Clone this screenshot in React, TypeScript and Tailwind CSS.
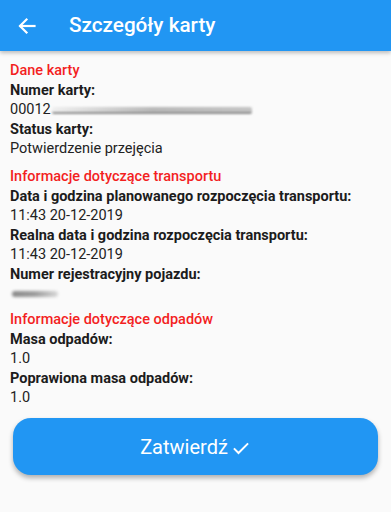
import React from "react"

type Row = {
    label: string
    value?: React.ReactNode
}

type Section = {
    title: string
    rows: Row[]
}

const CardNumber = () => (
    <span className="flex items-center">
        <span>00012</span>
        <span className="ml-[1px] h-[7px] w-[200px] rounded-[2px] bg-gradient-to-r from-[#f0f0f0] via-[#b9b9b9] to-[#c4c4c4] border-b-2 border-[#8d8d8d] blur-[1px]" />
    </span>
)

const Plate = () => (
    <span className="flex h-[18px] items-center">
        <span className="ml-[2px] h-[6px] w-[46px] rounded-full bg-gradient-to-r from-[#8a8a8a] via-[#9c9c9c] to-[#d8d8d8] blur-[1.5px]" />
    </span>
)

const sections: Section[] = [
    {
        title: "Dane karty",
        rows: [
            { label: "Numer karty:", value: <CardNumber /> },
            { label: "Status karty:", value: "Potwierdzenie przejęcia" }
        ]
    },
    {
        title: "Informacje dotyczące transportu",
        rows: [
            { label: "Data i godzina planowanego rozpoczęcia transportu:", value: "11:43 20-12-2019" },
            { label: "Realna data i godzina rozpoczęcia transportu:", value: "11:43 20-12-2019" },
            { label: "Numer rejestracyjny pojazdu:", value: <Plate /> }
        ]
    },
    {
        title: "Informacje dotyczące odpadów",
        rows: [
            { label: "Masa odpadów:", value: "1.0" },
            { label: "Poprawiona masa odpadów:", value: "1.0" }
        ]
    }
]

const App = () => {
    return (
        <div className="w-[391px] h-[512px] flex flex-col bg-[#fafafa] font-['Roboto',sans-serif] text-[14.5px] text-[#212121] overflow-hidden">
            {/* App bar */}
            <div className="relative z-10 h-[51px] shrink-0 flex items-center bg-[#2196f3] shadow-[0_2px_4px_rgba(0,0,0,0.25)]">
                <svg className="ml-[15px] h-[24px] w-[24px]" viewBox="0 0 24 24" fill="none" stroke="white" strokeWidth="2.2" strokeLinecap="square">
                    <path d="M19.5 12H5.5" />
                    <path d="M11.5 5.5L5 12l6.5 6.5" />
                </svg>
                <h1 className="ml-[30px] text-[20.7px] font-medium text-white leading-none">
                    Szczegóły karty
                </h1>
            </div>

            {/* Details */}
            <div className="flex-1 overflow-hidden px-[10px] pt-[11px]">
                {sections.map((section, i) => (
                    <div key={section.title} className={i === 0 ? "" : i === 1 ? "mt-[10px]" : "mt-[8px]"}>
                        <div className="leading-[18px] font-medium text-[#f31f1f]">
                            {section.title}
                        </div>
                        {section.rows.map(row => (
                            <div key={row.label} className="mt-[2px]">
                                <div className="leading-[18px] font-bold text-[#1c1c1c]">
                                    {row.label}
                                </div>
                                <div className="mt-[1px] leading-[18px] text-[#222]">
                                    {row.value}
                                </div>
                            </div>
                        ))}
                    </div>
                ))}
            </div>

            {/* Footer */}
            <div className="shrink-0 px-[13px] pb-[37px]">
                <button
                    type="button"
                    className="w-full h-[57px] rounded-[18px] bg-[#2196f3] shadow-[0_3px_5px_rgba(0,0,0,0.3)] flex items-center justify-center gap-[3px] text-white text-[20px]"
                >
                    <span>Zatwierdź</span>
                    <svg className="h-[20px] w-[20px] mt-[2px]" viewBox="0 0 24 24" fill="none" stroke="white" strokeWidth="2.4">
                        <path d="M3.5 12.5l5.5 5.5L20.5 6.5" />
                    </svg>
                </button>
            </div>
        </div>
    )
}

export default App
